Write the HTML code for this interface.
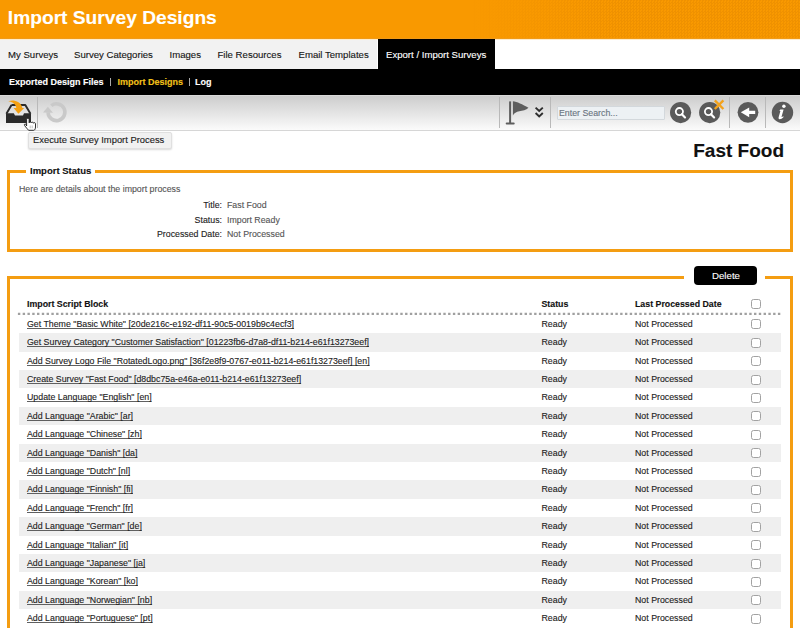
<!DOCTYPE html>
<html><head><meta charset="utf-8">
<style>
*{box-sizing:border-box;margin:0;padding:0}
html,body{width:800px;height:628px;overflow:hidden;background:#fff;font-family:"Liberation Sans",sans-serif;color:#222;-webkit-text-stroke:0.12px currentColor}
.abs{position:absolute}
#hdr{position:absolute;left:0;top:0;width:800px;height:40px;background:linear-gradient(#f99900 0,#f99900 37.6px,#ef9000 38.4px,#fde6bd 39.2px,#fff6e6 40px)}
#hdr .pat{position:absolute;left:470px;top:0;width:330px;height:37.5px;background:repeating-conic-gradient(#ec8f00 0 25%,transparent 0 50%) 0 0/3px 3px;-webkit-mask-image:linear-gradient(90deg,transparent,#000 140px);opacity:.75}
#hdr h1{position:absolute;left:7.8px;top:7.4px;font-size:19.2px;font-weight:bold;color:#fff;letter-spacing:0}
#tabs{position:absolute;left:0;top:40px;width:800px;height:29px;background:#fff}
#tabs .gray{position:absolute;left:0;top:0;width:377px;height:29px;background:#f2f2f2}
#tabs .act{position:absolute;left:378.3px;top:-1px;width:116.7px;height:30px;background:#000}
.tab{position:absolute;top:9.2px;font-size:9.6px;color:#151515;white-space:nowrap}
#sub{position:absolute;left:0;top:69px;width:800px;height:26px;background:#000}
.sn{position:absolute;top:7.8px;font-size:9px;font-weight:bold;color:#fff;white-space:nowrap}
#tb{position:absolute;left:0;top:95px;width:800px;height:36px;background:linear-gradient(#e2e2e2 0px,#cdcdcd 1.2px,#fbfbfb 35px);border-bottom:1px solid #d6d6d6}
.sep{position:absolute;top:2px;width:1px;height:31px;background:#b9b9b9}
#tip{position:absolute;left:27.5px;top:132px;width:144.5px;height:16.5px;background:#f1f1f1;border:1px solid #e0e0e0;border-radius:2px;box-shadow:0 1px 2px rgba(0,0,0,.15);font-size:9.4px;color:#1a1a1a;padding:1px 0 0 4.5px;white-space:nowrap}
#ff{position:absolute;right:16px;top:139.5px;font-size:19px;font-weight:bold;color:#111}
.box{position:absolute;left:7px;width:785.5px;border:3px solid #f49d12}
#b1{top:170px;height:82px}
#b2{top:276px;height:400px}
.legend{position:absolute;background:#fff;font-size:9.5px;font-weight:bold;color:#111;white-space:nowrap}
.t9{font-size:8.8px;white-space:nowrap;position:absolute}
.lbl{text-align:right;color:#222}
.val{color:#555}
#del{position:absolute;left:694px;top:266px;width:63px;height:19px;background:#000;border-radius:4px;color:#fff;font-size:9.7px;text-align:center;line-height:20px;padding-left:1px}
.row{position:absolute;left:19px;width:762px;height:18.4px}
.row.g{background:#efefef}
.row span{position:absolute;top:4px;font-size:8.8px;white-space:nowrap;color:#222}
.row .c1{left:8px;text-decoration:underline;text-decoration-color:#606060;text-decoration-skip-ink:none}
.row .c2{left:522.5px}
.row .c3{left:616px}
.cb{position:absolute;left:732px;top:4.5px;width:10px;height:10px;border:1px solid #a2a2a2;border-radius:2.5px;background:#fff}
</style></head><body>
<div id="hdr"><div class="pat"></div><h1>Import Survey Designs</h1></div>
<div id="tabs">
 <div class="gray"></div>
 <div class="act"></div>
 <span class="tab" style="left:8px">My Surveys</span>
 <span class="tab" style="left:74px">Survey Categories</span>
 <span class="tab" style="left:169.5px">Images</span>
 <span class="tab" style="left:217.5px">File Resources</span>
 <span class="tab" style="left:298.5px">Email Templates</span>
 <span class="tab" style="left:386px;color:#fff">Export / Import Surveys</span>
</div>
<div id="sub">
 <span class="sn" style="left:9px">Exported Design Files</span>
 <span class="abs" style="left:110px;top:9px;width:1px;height:8px;background:#aaa"></span>
 <span class="sn" style="left:117.5px;color:#f2c21a">Import Designs</span>
 <span class="abs" style="left:188.5px;top:9px;width:1px;height:8px;background:#aaa"></span>
 <span class="sn" style="left:195px">Log</span>
</div>
<div id="tb">
 <div class="sep" style="left:37px"></div>
 <div class="sep" style="left:499px"></div>
 <div class="sep" style="left:550px"></div>
 <div class="sep" style="left:729.4px"></div>
 <div class="sep" style="left:764.5px"></div>
</div>
<svg class="abs" style="left:0;top:0" width="800" height="140" viewBox="0 0 800 140">
 <!-- tray -->
 <path d="M11.5,105 L25.3,105 L30.5,113.8 M11.5,105 L6.4,113.8" fill="none" stroke="#2b2b2b" stroke-width="1.9" stroke-linejoin="round"/>
 <path d="M6,113.3 L13.8,113.3 L15,115.6 L23,115.6 L24,113.3 L31,113.3 L31,123 L6,123 Z" fill="#2b2b2b"/>
 <path d="M8.3,101.2 C11,100.2 15,100 18.5,102.3 C20.8,104 22,106 22.3,108 L24.2,108 L18.4,113.8 L13.6,108 L16.3,108 C16,106 15,104 12.5,102.6 C11.5,102 10,101.5 8.3,101.2 Z" fill="#f5a011"/>
 <!-- hand cursor -->
 <path d="M26.6,126 L26.6,119.4 C26.6,117.8 29.1,117.8 29.1,119.4 L29.1,122.8 C29.3,121.7 31.3,121.7 31.3,122.9 C31.5,121.9 33.5,122 33.5,123.2 C33.7,122.3 35.5,122.5 35.5,123.7 L35.5,127 C35.5,128.8 34.7,130.3 33.7,130.3 L28.6,130.3 C27.5,129.2 26.2,127.5 24.6,125.6 C23.8,124.6 24.8,123.5 25.9,124.3 Z" fill="#fff" stroke="#1a1a1a" stroke-width="0.9" stroke-linejoin="round"/>
 <path d="M30.2,125.5 L30.2,128.3 M32.2,125.5 L32.2,128.3" stroke="#999" stroke-width="0.6"/>
 <!-- refresh -->
 <path d="M51.3,105.6 A8.4,8.4 0 1 1 48.1,112.2" fill="none" stroke="#c9c9c9" stroke-width="3.6"/>
 <path d="M43,112.6 L47.9,106.8 L53,112.8 Z" fill="#c9c9c9"/>
 <!-- flag -->
 <rect x="509.1" y="101.4" width="2" height="22.5" fill="#5e5e5e"/>
 <rect x="505.7" y="122.4" width="9" height="2.2" rx="1" fill="#5e5e5e"/>
 <path d="M512.9,101.3 C517,101.6 522.5,104.6 528.5,107.7 C526.2,110 522.5,110.6 519.3,111.2 C516.3,111.8 514.2,113 512.9,115.4 Z" fill="#5e5e5e"/>
 <!-- chevrons -->
 <path d="M535.6,107.6 L539.2,111 L542.8,107.6 M535.6,113 L539.2,116.4 L542.8,113" fill="none" stroke="#2e2e2e" stroke-width="1.9"/>
 <!-- search circles -->
 <circle cx="680.6" cy="112.6" r="10.6" fill="#5a5a5a"/>
 <circle cx="679.4" cy="111.6" r="3.6" fill="none" stroke="#fff" stroke-width="1.8"/>
 <path d="M681.9,114.2 L685,117.4" stroke="#fff" stroke-width="2.2" stroke-linecap="round"/>
 <circle cx="709.7" cy="112.6" r="10.6" fill="#5a5a5a"/>
 <circle cx="708.5" cy="111.6" r="3.6" fill="none" stroke="#fff" stroke-width="1.8"/>
 <path d="M711,114.2 L714.1,117.4" stroke="#fff" stroke-width="2.2" stroke-linecap="round"/>
 <path d="M714.8,100.4 L723.4,109 M723.4,100.4 L714.8,109" stroke="#f3a21c" stroke-width="2.4"/>
 <!-- back -->
 <circle cx="748" cy="112.3" r="10.4" fill="#5a5a5a"/>
 <path d="M740.8,112.3 L749.2,107.5 L749.2,110.7 L755.2,110.7 L755.2,114 L749.2,114 L749.2,117.2 Z" fill="#fff"/>
 <!-- info -->
 <circle cx="782.5" cy="112.5" r="10.7" fill="#5a5a5a"/>
 <circle cx="783.9" cy="106.3" r="1.7" fill="#fff"/>
 <path d="M780.3,109.6 L783.6,109.6 L781.6,116.5 C781.4,117.3 782,117.4 783.3,116.3 L783.6,117 C782.3,118.6 780.9,119.2 779.7,119.2 C778.6,119.2 778.3,118.4 778.7,117 L780.4,111 L779.4,111 Z" fill="#fff"/>
</svg>
<div class="abs" style="left:556.5px;top:105.8px;width:108.5px;height:13.8px;background:#edf1f4;border:1px solid #d3d8dc;border-radius:1px"></div>
<div class="abs" style="left:559px;top:108px;font-size:8.8px;color:#6a7480;white-space:nowrap">Enter Search...</div>
<div id="tip">Execute Survey Import Process</div>
<div id="ff">Fast Food</div>

<div class="box" id="b1"></div>
<div class="legend" style="left:26px;top:165px;padding:0 4px">Import Status</div>
<div class="t9" style="left:19px;top:184px;color:#555">Here are details about the import process</div>
<div class="t9 lbl" style="left:122px;width:100px;top:200px">Title:</div>
<div class="t9 val" style="left:227px;top:200px">Fast Food</div>
<div class="t9 lbl" style="left:122px;width:100px;top:214.5px">Status:</div>
<div class="t9 val" style="left:227px;top:214.5px">Import Ready</div>
<div class="t9 lbl" style="left:122px;width:100px;top:229px">Processed Date:</div>
<div class="t9 val" style="left:227px;top:229px">Not Processed</div>

<div class="box" id="b2"></div>
<div class="abs" style="left:684px;top:270px;width:81px;height:12px;background:#fff"></div>
<div id="del">Delete</div>
<div class="abs" style="left:19px;top:296px;width:762px;height:18px">
 <span class="t9" style="left:8px;top:3px;font-weight:bold;color:#111">Import Script Block</span>
 <span class="t9" style="left:522.5px;top:3px;font-weight:bold;color:#111">Status</span>
 <span class="t9" style="left:616px;top:3px;font-weight:bold;color:#111">Last Processed Date</span>
 <div class="cb" style="top:3px"></div>
</div>
<svg class="abs" style="left:0;top:300px" width="800" height="30"><line x1="17.9" y1="13.9" x2="782" y2="13.9" stroke="#a0a0a0" stroke-width="2.3" stroke-dasharray="2.39 2.39"/></svg>
<div id="rows">
<div class="row" style="top:314.8px"><span class="c1">Get Theme &quot;Basic White&quot; [20de216c-e192-df11-90c5-0019b9c4ecf3]</span><span class="c2">Ready</span><span class="c3">Not Processed</span><div class="cb"></div></div>
<div class="row g" style="top:333.2px"><span class="c1">Get Survey Category &quot;Customer Satisfaction&quot; [01223fb6-d7a8-df11-b214-e61f13273eef]</span><span class="c2">Ready</span><span class="c3">Not Processed</span><div class="cb"></div></div>
<div class="row" style="top:351.6px"><span class="c1">Add Survey Logo File &quot;RotatedLogo.png&quot; [36f2e8f9-0767-e011-b214-e61f13273eef] [en]</span><span class="c2">Ready</span><span class="c3">Not Processed</span><div class="cb"></div></div>
<div class="row g" style="top:370.0px"><span class="c1">Create Survey &quot;Fast Food&quot; [d8dbc75a-e46a-e011-b214-e61f13273eef]</span><span class="c2">Ready</span><span class="c3">Not Processed</span><div class="cb"></div></div>
<div class="row" style="top:388.4px"><span class="c1">Update Language &quot;English&quot; [en]</span><span class="c2">Ready</span><span class="c3">Not Processed</span><div class="cb"></div></div>
<div class="row g" style="top:406.8px"><span class="c1">Add Language &quot;Arabic&quot; [ar]</span><span class="c2">Ready</span><span class="c3">Not Processed</span><div class="cb"></div></div>
<div class="row" style="top:425.2px"><span class="c1">Add Language &quot;Chinese&quot; [zh]</span><span class="c2">Ready</span><span class="c3">Not Processed</span><div class="cb"></div></div>
<div class="row g" style="top:443.6px"><span class="c1">Add Language &quot;Danish&quot; [da]</span><span class="c2">Ready</span><span class="c3">Not Processed</span><div class="cb"></div></div>
<div class="row" style="top:462.0px"><span class="c1">Add Language &quot;Dutch&quot; [nl]</span><span class="c2">Ready</span><span class="c3">Not Processed</span><div class="cb"></div></div>
<div class="row g" style="top:480.4px"><span class="c1">Add Language &quot;Finnish&quot; [fi]</span><span class="c2">Ready</span><span class="c3">Not Processed</span><div class="cb"></div></div>
<div class="row" style="top:498.8px"><span class="c1">Add Language &quot;French&quot; [fr]</span><span class="c2">Ready</span><span class="c3">Not Processed</span><div class="cb"></div></div>
<div class="row g" style="top:517.2px"><span class="c1">Add Language &quot;German&quot; [de]</span><span class="c2">Ready</span><span class="c3">Not Processed</span><div class="cb"></div></div>
<div class="row" style="top:535.6px"><span class="c1">Add Language &quot;Italian&quot; [it]</span><span class="c2">Ready</span><span class="c3">Not Processed</span><div class="cb"></div></div>
<div class="row g" style="top:554.0px"><span class="c1">Add Language &quot;Japanese&quot; [ja]</span><span class="c2">Ready</span><span class="c3">Not Processed</span><div class="cb"></div></div>
<div class="row" style="top:572.4px"><span class="c1">Add Language &quot;Korean&quot; [ko]</span><span class="c2">Ready</span><span class="c3">Not Processed</span><div class="cb"></div></div>
<div class="row g" style="top:590.8px"><span class="c1">Add Language &quot;Norwegian&quot; [nb]</span><span class="c2">Ready</span><span class="c3">Not Processed</span><div class="cb"></div></div>
<div class="row" style="top:609.2px"><span class="c1">Add Language &quot;Portuguese&quot; [pt]</span><span class="c2">Ready</span><span class="c3">Not Processed</span><div class="cb"></div></div>
</div>
</body></html>
